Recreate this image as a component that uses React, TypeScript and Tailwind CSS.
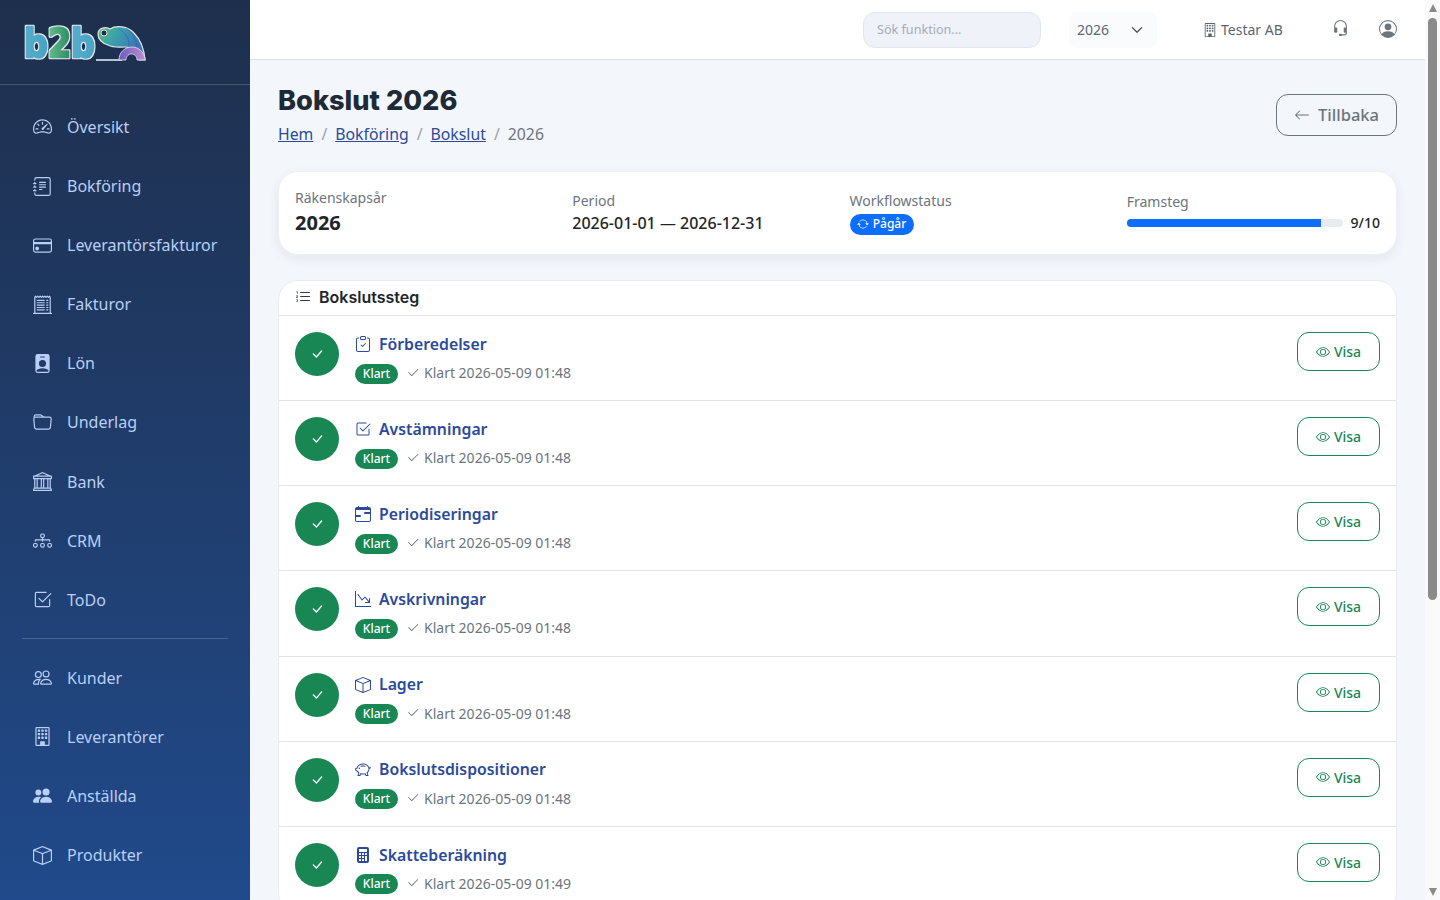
import type { IconType } from 'react-icons'
import {
  BsArrowLeft,
  BsArrowRepeat,
  BsBank,
  BsBox,
  BsBuilding,
  BsCalculatorFill,
  BsCalendarRange,
  BsCheck2,
  BsCheck2Square,
  BsCheckLg,
  BsChevronDown,
  BsClipboardCheck,
  BsCreditCard,
  BsDiagram3,
  BsEye,
  BsFolder,
  BsGraphDownArrow,
  BsHeadset,
  BsJournalText,
  BsListOl,
  BsPeople,
  BsPeopleFill,
  BsPersonBadgeFill,
  BsPersonCircle,
  BsPiggyBank,
  BsReceiptCutoff,
  BsSpeedometer2,
} from 'react-icons/bs'

const FONT = 'font-["Noto_Sans","Open_Sans",sans-serif]'
const HEAD = 'font-["Inter","Noto_Sans",sans-serif]'

const NAV_TOP: [IconType, string][] = [
  [BsSpeedometer2, 'Översikt'],
  [BsJournalText, 'Bokföring'],
  [BsCreditCard, 'Leverantörsfakturor'],
  [BsReceiptCutoff, 'Fakturor'],
  [BsPersonBadgeFill, 'Lön'],
  [BsFolder, 'Underlag'],
  [BsBank, 'Bank'],
  [BsDiagram3, 'CRM'],
  [BsCheck2Square, 'ToDo'],
]
const NAV_BOTTOM: [IconType, string][] = [
  [BsPeople, 'Kunder'],
  [BsBuilding, 'Leverantörer'],
  [BsPeopleFill, 'Anställda'],
  [BsBox, 'Produkter'],
]

const STEPS: [IconType, string, string][] = [
  [BsClipboardCheck, 'Förberedelser', '2026-05-09 01:48'],
  [BsCheck2Square, 'Avstämningar', '2026-05-09 01:48'],
  [BsCalendarRange, 'Periodiseringar', '2026-05-09 01:48'],
  [BsGraphDownArrow, 'Avskrivningar', '2026-05-09 01:48'],
  [BsBox, 'Lager', '2026-05-09 01:48'],
  [BsPiggyBank, 'Bokslutsdispositioner', '2026-05-09 01:48'],
  [BsCalculatorFill, 'Skatteberäkning', '2026-05-09 01:49'],
]

const Logo = () => (
  <svg width="126" height="36" viewBox="0 0 126 36" className="block overflow-visible">
    <defs>
      <linearGradient id="lt" gradientUnits="userSpaceOnUse" x1="0" y1="0" x2="74" y2="0">
        <stop offset="0" stopColor="#55aecb" />
        <stop offset="0.33" stopColor="#4aa3c4" />
        <stop offset="0.37" stopColor="#62bb8c" />
        <stop offset="0.63" stopColor="#2f8f66" />
        <stop offset="0.67" stopColor="#55aecb" />
        <stop offset="1" stopColor="#4aa3c4" />
      </linearGradient>
      <linearGradient id="le" x1="0" y1="0" x2="1" y2="0.5">
        <stop offset="0" stopColor="#6abb5c" />
        <stop offset="0.35" stopColor="#3aa7a8" />
        <stop offset="1" stopColor="#3f6bbb" />
      </linearGradient>
      <linearGradient id="ll" x1="0" y1="0" x2="1" y2="0">
        <stop offset="0" stopColor="#6a5bc0" />
        <stop offset="1" stopColor="#c38ed2" />
      </linearGradient>
      <filter id="lo" x="-20%" y="-20%" width="140%" height="140%">
        <feMorphology in="SourceAlpha" operator="dilate" radius="0.9" result="d" />
        <feFlood floodColor="#dfe7ee" result="f" />
        <feComposite in="f" in2="d" operator="in" result="o" />
        <feMerge>
          <feMergeNode in="o" />
          <feMergeNode in="SourceGraphic" />
        </feMerge>
      </filter>
    </defs>
    <text
      x="2"
      y="31"
      fill="url(#lt)"
      stroke="url(#lt)"
      fontFamily="'DejaVu Sans', sans-serif"
      fontWeight="700"
      fontSize="39"
      strokeLinejoin="round"
      strokeWidth="2.6"
      filter="url(#lo)"
      textLength="71"
      lengthAdjust="spacingAndGlyphs"
    >
      b2b
    </text>
    {/* elefanten */}
    <path d="M74 34h26" stroke="#dfe7ee" strokeWidth="1.6" />
    <path
      d="M76 8C76 2 84 0 88 3 94-1 106 0 112 7 118 13 122 22 123 34L117 34C116 26 110 21 103 21 96 21 92 22 86 19 80 17 76 13 76 8Z"
      fill="url(#le)"
      stroke="#dfe7ee"
      strokeWidth="1.2"
    />
    <path d="M97 3C104 7 108 14 107 21M104 2C111 7 115 14 115 23" fill="none" stroke="#2d5fa8" strokeWidth="1" opacity="0.6" />
    <path
      d="M97 34C97 26 103 21 110 21 117 21 122 26 123.5 34L115 34C115 30 112 28 109.5 28 107 28 104 30 104 34Z"
      fill="url(#ll)"
      stroke="#dfe7ee"
      strokeWidth="0.8"
    />
    <circle cx="82" cy="7" r="3" fill="#1e2f4d" stroke="#dfe7ee" strokeWidth="1" />
  </svg>
)

const NavItem = ({ icon: Icon, label }: { icon: IconType; label: string }) => (
  <a className="flex h-[59.1px] items-center pl-[33px] text-[16px] text-[#b9cff5]">
    <Icon className="mr-[15px] size-[19px] shrink-0" />
    {label}
  </a>
)

const Sidebar = () => (
  <aside className="h-full w-[250px] shrink-0 overflow-hidden bg-gradient-to-b from-[#1e2f4c] to-[#204a8b]">
    <div className="flex h-[85px] items-center border-b border-[#48596f] pl-[22px] pt-[3px]">
      <Logo />
    </div>
    <nav className="pt-[12.42px]">
      {NAV_TOP.map(([icon, label]) => (
        <NavItem key={label} icon={icon} label={label} />
      ))}
      <div className="mx-[22px] mt-[8.5px] mb-[9.5px] h-px bg-[#4a6490]" />
      {NAV_BOTTOM.map(([icon, label]) => (
        <NavItem key={label} icon={icon} label={label} />
      ))}
    </nav>
  </aside>
)

const Topbar = () => (
  <header className="flex h-[60px] shrink-0 items-center border-b border-[#dde2ea] bg-white text-[#5c6670]">
    <div className="ml-[613px] flex h-9 w-[178px] items-center rounded-xl border border-[#e2e6ef] bg-[#eff2f9] pl-[13px] pt-[2px] text-[12.6px] text-[#a4acb9]">
      Sök funktion...
    </div>
    <div className="ml-7 flex h-9 w-[88px] items-center justify-between rounded-lg bg-[#fafbfd] pl-2 pr-[14px] text-[14px]">
      2026
      <BsChevronDown className="size-3 stroke-[0.8] text-[#343a40]" />
    </div>
    <div className="ml-[46px] flex items-center text-[14px]">
      <BsBuilding className="mr-[4px] size-[14px]" />
      Testar AB
    </div>
    <BsHeadset className="ml-[49px] mb-[2px] size-[17px] text-[#6c757d]" />
    <BsPersonCircle className="ml-[30px] mb-[2px] size-[18px] text-[#6c757d]" />
  </header>
)

const InfoCard = () => (
  <section className="grid h-[84px] grid-cols-4 items-center gap-6 rounded-[20px] border border-[#edf0f5] bg-white px-4 shadow-[0_4px_12px_rgba(30,50,90,0.07)]">
    <div className="pb-[1px]">
      <div className="text-[14px] leading-[20px] text-[#6c757d]">Räkenskapsår</div>
      <div className="mt-[1px] text-[20px] font-bold leading-[28px] text-[#212529]">2026</div>
    </div>
    <div className="pt-[1px] pb-[1px]">
      <div className="text-[14px] leading-[20px] text-[#6c757d]">Period</div>
      <div className="text-[16px] font-medium leading-[24px] text-[#212529]">2026-01-01 — 2026-12-31</div>
    </div>
    <div className="pb-[1px]">
      <div className="text-[14px] leading-[20px] text-[#6c757d]">Workflowstatus</div>
      <span className="mt-[3px] flex h-[21px] w-16 items-center justify-center gap-1 rounded-full bg-[#0d6efd] text-[12px] font-medium text-white">
        <BsArrowRepeat className="size-3" />
        Pågår
      </span>
    </div>
    <div className="pb-[1px]">
      <div className="text-[14px] leading-[20px] text-[#6c757d]">Framsteg</div>
      <div className="flex items-center gap-2">
        <div className="h-2 flex-1 overflow-hidden rounded bg-[#e9ecef]">
          <div className="h-full w-[90%] bg-[#0d6efd]" />
        </div>
        <span className="text-[14px] font-medium text-[#212529]">9/10</span>
      </div>
    </div>
  </section>
)

const StepRow = ({ icon: Icon, title, date }: { icon: IconType; title: string; date: string }) => (
  <div className="flex h-[85.17px] items-start border-b border-[#e2e5ec] px-4 pt-4">
    <div className="flex size-11 shrink-0 items-center justify-center rounded-full bg-[#198754] text-white">
      <BsCheckLg className="size-[14px]" />
    </div>
    <div className="ml-4 flex-1">
      <div className="flex h-6 items-center text-[#2b4a9b]">
        <Icon className="mr-2 size-4 shrink-0" />
        <span className="pt-[1px] text-[15.8px] font-semibold">{title}</span>
      </div>
      <div className="mt-[5.5px] flex items-center text-[14px] text-[#6c757d]">
        <span className="mt-[2px] flex h-5 w-[43px] items-center justify-center rounded-full bg-[#198754] text-[12px] font-medium text-white">
          Klart
        </span>
        <BsCheck2 className="ml-2 mr-1 size-3.5" />
        Klart {date}
      </div>
    </div>
    <button className="flex h-[39px] w-[83px] items-center justify-center gap-1 rounded-xl border border-[#198754] text-[14px] font-medium text-[#198754]">
      <BsEye className="size-[14px]" />
      Visa
    </button>
  </div>
)

// webbläsarens rullningslist, ritad eftersom den inte syns i headless-läge
const Scrollbar = () => (
  <div className="flex h-full w-[15px] shrink-0 flex-col items-center bg-[#fafafa] py-1">
    <div className="size-0 border-x-[4.5px] border-b-[8px] border-x-transparent border-b-[#8a8a8a]" />
    <div className="mt-[6px] h-[582px] w-[9px] rounded-full bg-[#8a8a8a]" />
    <div className="flex-1" />
    <div className="size-0 border-x-[4.5px] border-t-[8px] border-x-transparent border-t-[#8a8a8a]" />
  </div>
)

export default function App() {
  return (
    <div className={`flex h-screen overflow-hidden bg-[#f3f6fb] ${FONT}`}>
      <Sidebar />
      <div className="min-w-0 flex-1 overflow-hidden">
        <Topbar />
        <main className="px-7">
          <div className="flex h-[111px] items-start justify-between pt-[24px]">
            <div>
              <h1 className={`text-[27.2px] font-extrabold leading-[34px] text-[#1f2a37] ${HEAD}`}>Bokslut 2026</h1>
              <div className="mt-[4px] flex items-center text-[15.8px] leading-6 text-[#6c757d]">
                <a className="text-[#2b4a9b] underline">Hem</a>
                <span className="px-2 text-[#9aa2ab]">/</span>
                <a className="text-[#2b4a9b] underline">Bokföring</a>
                <span className="px-2 text-[#9aa2ab]">/</span>
                <a className="text-[#2b4a9b] underline">Bokslut</a>
                <span className="px-2 text-[#9aa2ab]">/</span>
                <span>2026</span>
              </div>
            </div>
            <button className="mt-[10px] flex h-[42px] w-[121px] items-center justify-center gap-2 rounded-xl border border-[#6c757d] text-[16.5px] font-medium text-[#6c757d]">
              <BsArrowLeft className="size-4" />
              Tillbaka
            </button>
          </div>
          <InfoCard />
          <section className="mt-[25px] overflow-hidden rounded-[20px] border border-[#e8ebf1] bg-white">
            <div className="flex h-[35px] items-center border-b border-[#e2e5ec] px-4 pb-[2px]">
              <BsListOl className="mr-2 size-4 text-[#343a40]" />
              <span className={`text-[16px] font-semibold text-[#212529] ${HEAD}`}>Bokslutssteg</span>
            </div>
            {STEPS.map(([icon, title, date]) => (
              <StepRow key={title} icon={icon} title={title} date={date} />
            ))}
          </section>
        </main>
      </div>
      <Scrollbar />
    </div>
  )
}
